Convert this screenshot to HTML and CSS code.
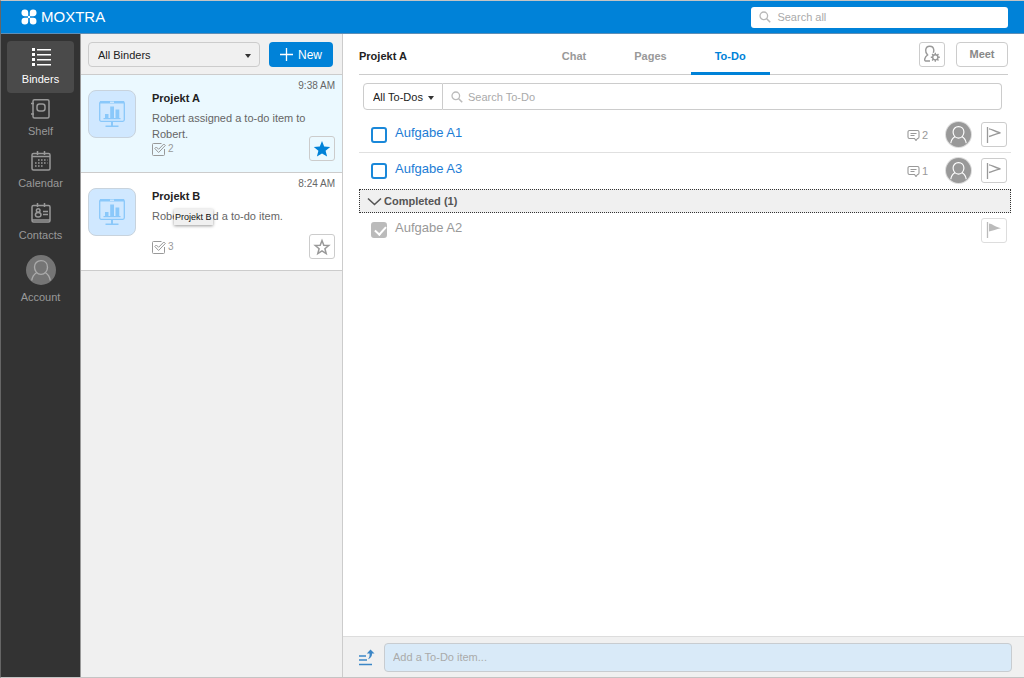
FILE: index.html
```html
<!DOCTYPE html>
<html lang="en">
<head>
    <meta charset="UTF-8">
    <meta name="viewport" content="width=device-width, initial-scale=1.0">
    <title>Moxtra - Projekt A</title>
    <link rel="stylesheet" href="styles.css">
</head>
<body>
    <!-- shared icons -->
    <svg class="sprite" aria-hidden="true">
        <symbol id="search" viewBox="0 0 12 12">
            <circle cx="4.8" cy="4.8" r="3.8" fill="none" stroke="currentColor" stroke-width="1.3"/>
            <path d="M7.7 7.7 11.2 11.2" stroke="currentColor" stroke-width="1.6"/>
        </symbol>
        <symbol id="board" viewBox="0 0 26 28">
            <rect x=".7" y="1.7" width="24.6" height="19.6" rx="1.5" fill="none" stroke="currentColor" stroke-width="1.3"/>
            <path d="M1 1h24v2.600H1zM4.500 18h17v1.300h-17zM6 14h3.500v4H6zM11.200 6.500H15V18h-3.800zM16.500 9.500h3.800V18h-3.800zM12 21.500h2V26h-2zM6.500 25.500h13V27h-13z" fill="currentColor"/>
            <path d="M11 2.200h4" stroke="#e8f4ff"/>
        </symbol>
        <symbol id="person" viewBox="0 0 24 24">
            <path d="M12 4.500c3.200 0 5.200 2.300 5.200 5.200S15.200 15.500 12 15.500 6.800 12.600 6.800 9.700 8.800 4.500 12 4.500zM8.500 14.200C6.200 15.500 5 17.500 4.600 20.400M15.500 14.200c2.300 1.300 3.500 3.300 3.900 6.200" fill="none" stroke="currentColor" stroke-width="1.1"/>
        </symbol>
        <symbol id="task" viewBox="0 0 14 14">
            <path d="M9.500 1.500h-8a1 1 0 0 0-1 1v10a1 1 0 0 0 1 1h10a1 1 0 0 0 1-1V7" fill="none" stroke="currentColor"/>
            <path d="M2.800 6.500 4.300 5l2.300 2.300L11.800 2l1.500 1.500-6.700 7z" fill="none" stroke="currentColor"/>
        </symbol>
        <symbol id="comment" viewBox="0 0 13 12">
            <path d="M2.500 1.500h8a1.500 1.500 0 0 1 1.500 1.500v5a1.500 1.500 0 0 1-1.500 1.500L9 11.500 7.500 9.500h-5A1.500 1.500 0 0 1 1 8V3a1.500 1.500 0 0 1 1.500-1.500zM3.500 4.500h6M3.500 6.500h4" fill="none" stroke="currentColor" stroke-width="1.100"/>
        </symbol>
        <symbol id="flag" viewBox="0 0 16 16">
            <path d="M1.500 0v16" stroke="currentColor" stroke-width="1.300"/>
            <path d="M3 1.800C6 2 8 4.500 14.500 5.800 10 6.500 7 8.500 3 9.500" fill="none" stroke="currentColor" stroke-width="1.300"/>
        </symbol>
        <symbol id="flag-full" viewBox="0 0 16 16">
            <path d="M1.500 0v16" stroke="currentColor" stroke-width="1.300"/>
            <path d="M3 1.500C6 1.500 8 4.500 15 6.300 10 7 7 9 3 9.500z" fill="currentColor"/>
        </symbol>
    </svg>

    <header class="topbar">
        <a class="logo" href="#">
            <svg width="16" height="16" viewBox="0 0 16 16" fill="#fff">
                <path d="M3.800.500A3.300 3.300 0 0 1 7.200 3.800V7.200H3.800a3.350 3.350 0 0 1 0-6.700zM12.200.500a3.350 3.350 0 0 1 0 6.700H8.800V3.800A3.300 3.300 0 0 1 12.200.500zM3.800 8.800h3.400v3.400A3.350 3.350 0 1 1 3.800 8.800zM8.800 8.800h3.400A3.350 3.350 0 1 1 8.800 12.200z"/>
                <path d="M6 6 10 10M10 6 6 10" stroke="#fff"/>
            </svg>
            <span>MOXTRA</span>
        </a>
        <label class="search-all">
            <svg width="12" height="12"><use href="#search"/></svg>
            <input type="search" placeholder="Search all" aria-label="Search all">
        </label>
    </header>

    <div class="app">
        <nav class="sidebar">
            <a class="nav-item active" href="#">
                <svg width="20" height="20" viewBox="0 0 20 20" fill="#fff">
                    <path d="M1 1h3v3H1zM1 6h3v3H1zM1 11h3v3H1zM1 16h3v3H1zM6 2h14v1.500H6zM6 7h14v1.500H6zM6 12h14v1.500H6zM6 17h14v1.500H6z"/>
                </svg>
                Binders
            </a>
            <a class="nav-item" href="#">
                <svg width="20" height="20" viewBox="0 0 20 20" fill="none" stroke="currentColor" stroke-width="1.500">
                    <rect x="2" y=".800" width="16" height="18.200" rx="1.500"/>
                    <rect x="6" y="5" width="8" height="7" rx="2.500"/>
                    <path d="M0 4.500h3M0 15h3"/>
                </svg>
                Shelf
            </a>
            <a class="nav-item" href="#">
                <svg width="20" height="20" viewBox="0 0 20 20" fill="none" stroke="currentColor" stroke-width="1.500">
                    <rect x="1" y="2.500" width="18" height="16.500" rx="1.500"/>
                    <path d="M1 5.500h18M6.500 0v4M13.500 0v4"/>
                    <path d="M7 9h9.500M4 12h12.500M4 15h9" stroke-width="1.600" stroke-dasharray="1.600 1.400"/>
                </svg>
                Calendar
            </a>
            <a class="nav-item" href="#">
                <svg width="20" height="20" viewBox="0 0 20 20" fill="none" stroke="currentColor" stroke-width="1.500">
                    <rect x="1" y="2.500" width="18" height="16.500" rx="1.500"/>
                    <path d="M1 17h18M6.500 0v4M13.500 0v4M12 8.500h5M12 11.500h5"/>
                    <circle cx="7.200" cy="7.500" r="1.800"/>
                    <ellipse cx="7.200" cy="11.700" rx="2.800" ry="2.300"/>
                </svg>
                Contacts
            </a>
            <a class="nav-item account" href="#">
                <svg class="avatar" width="30" height="30"><use href="#person"/></svg>
                Account
            </a>
        </nav>

        <section class="binders">
            <div class="binder-bar">
                <span class="select select-binders">
                    <select aria-label="Binder filter"><option>All Binders</option></select>
                </span>
                <button class="btn-new" type="button">
                    <svg width="13" height="13" viewBox="0 0 13 13"><path d="M6.500 0v13M0 6.500h13" stroke="#fff" stroke-width="1.300"/></svg>
                    New
                </button>
            </div>

            <article class="binder selected">
                <div class="cover"><svg width="26" height="28"><use href="#board"/></svg></div>
                <div class="binder-info">
                    <time>9:38 AM</time>
                    <h2>Projekt A</h2>
                    <p>Robert assigned a to-do item to Robert.</p>
                    <span class="count"><svg width="14" height="14"><use href="#task"/></svg>2</span>
                </div>
                <button class="icon-btn star on" type="button" aria-label="Favorite">
                    <svg width="18" height="18" viewBox="0 0 18 18"><path d="M9 1l2.200 5.600 6 .4-4.600 3.800 1.500 5.800L9 13.400l-5.100 3.200 1.500-5.800L.800 7l6-.4z" fill="currentColor"/></svg>
                </button>
            </article>

            <article class="binder">
                <div class="cover"><svg width="26" height="28"><use href="#board"/></svg></div>
                <div class="binder-info">
                    <time>8:24 AM</time>
                    <h2>Projekt B</h2>
                    <p>Robert added a to-do item.</p>
                    <span class="count"><svg width="14" height="14"><use href="#task"/></svg>3</span>
                    <span class="tooltip" role="tooltip">Projekt B</span>
                </div>
                <button class="icon-btn star" type="button" aria-label="Favorite">
                    <svg width="18" height="18" viewBox="0 0 18 18"><path d="M9 2.500l1.800 4.700 5 .3-3.900 3.200 1.300 4.900L9 12.900l-4.200 2.700 1.300-4.900-3.900-3.200 5-.3z" fill="none" stroke="currentColor" stroke-width="1.500"/></svg>
                </button>
            </article>
        </section>

        <main class="content">
            <div class="project-head">
                <h1>Projekt A</h1>
                <nav class="tabs">
                    <a href="#">Chat</a>
                    <a href="#">Pages</a>
                    <a class="active" href="#">To-Do</a>
                </nav>
                <div class="actions">
                    <button class="icon-btn" type="button" aria-label="Members">
                        <svg width="18" height="18" viewBox="0 0 18 18" fill="none" stroke="currentColor" stroke-width="1.400">
                            <path d="M7 16H2.500C1 16 1.500 12 4.600 10 3 8.500 2.500 6.800 2.700 5 3 2.500 4.500 1.200 6.700 1.200s3.900 1.500 4.100 3.800c.1 1-.2 2-.6 2.800"/>
                            <circle cx="12.300" cy="12.300" r="2.600"/>
                            <path d="M12.300 7.800v2M12.300 14.800v2M7.800 12.300h2M14.800 12.300h2M9.100 9.100l1.400 1.400M14.100 14.100l1.400 1.400M9.100 15.500l1.400-1.400M14.100 10.500l1.400-1.400"/>
                        </svg>
                    </button>
                    <button class="btn-meet" type="button">Meet</button>
                </div>
            </div>

            <div class="filter">
                <span class="select select-todos">
                    <select aria-label="To-do filter"><option>All To-Dos</option></select>
                </span>
                <label class="search-todo">
                    <svg width="12" height="12"><use href="#search"/></svg>
                    <input type="search" placeholder="Search To-Do" aria-label="Search To-Do">
                </label>
            </div>

            <div class="todo">
                <input type="checkbox" id="a1">
                <label for="a1">Aufgabe A1</label>
                <span class="comments"><svg width="13" height="12"><use href="#comment"/></svg>2</span>
                <svg class="avatar" width="25" height="25"><use href="#person"/></svg>
                <button class="icon-btn" type="button" aria-label="Flag"><svg width="16" height="16"><use href="#flag"/></svg></button>
            </div>
            <div class="todo">
                <input type="checkbox" id="a3">
                <label for="a3">Aufgabe A3</label>
                <span class="comments"><svg width="13" height="12"><use href="#comment"/></svg>1</span>
                <svg class="avatar" width="25" height="25"><use href="#person"/></svg>
                <button class="icon-btn" type="button" aria-label="Flag"><svg width="16" height="16"><use href="#flag"/></svg></button>
            </div>
            <button class="completed" type="button">
                <svg width="15" height="9" viewBox="0 0 15 9"><path d="M1 1.500 7.500 7.500 14 1.500" fill="none" stroke="currentColor" stroke-width="1.600"/></svg>
                Completed (1)
            </button>
            <div class="todo done">
                <input type="checkbox" id="a2" checked>
                <label for="a2">Aufgabe A2</label>
                <button class="icon-btn" type="button" aria-label="Flag"><svg width="16" height="16"><use href="#flag-full"/></svg></button>
            </div>

            <form class="add-todo">
                <svg width="17" height="17" viewBox="0 0 17 17">
                    <path d="M1 7h7M1 11h8M1 15.500h13" stroke="#3b86c6" stroke-width="1.600"/>
                    <path d="M12.500.500 16.500 4.500H14C14.200 7 13 9 10 10.200 11.500 8.500 11.800 6.500 11.500 4.500H8.800z" fill="#3b86c6"/>
                </svg>
                <input type="text" placeholder="Add a To-Do item..." aria-label="Add a To-Do item">
            </form>
        </main>
    </div>
</body>
</html>
```
FILE: styles.css
```css
* { box-sizing: border-box; }
body {
    margin: 0;
    min-height: 100vh;
    display: flex;
    flex-direction: column;
    font-family: "Liberation Sans", Arial, sans-serif;
    font-size: 11px;
    line-height: 16px;
    color: #333;
    background: #fff;
    border: 1px solid #c4c4c4;
    border-left-color: #666;
    border-right: none;
}
h1, h2, p { margin: 0; font-size: 11px; }
a { text-decoration: none; color: inherit; }
svg { flex: none; }
button, input, select { font: inherit; color: inherit; }
button { cursor: pointer; padding: 0; }
input::placeholder { color: #aaa; opacity: 1; }
.sprite { position: absolute; width: 0; height: 0; }

/* top bar */
.topbar {
    height: 33px;
    background: #0082d8;
    border-bottom: 1px solid #5f8eb5;
    display: flex;
    align-items: center;
    justify-content: space-between;
    padding: 0 16px 0 20px;
}
.logo {
    display: flex;
    align-items: center;
    gap: 4px;
    color: #fff;
    font-size: 15px;
}
.search-all {
    display: flex;
    align-items: center;
    gap: 6px;
    width: 26%;
    height: 21px;
    padding: 0 8px;
    background: #fff;
    border-radius: 3px;
    color: #b8b8b8;
}
.search-all input, .search-todo input {
    flex: 1;
    min-width: 0;
    border: none;
    outline: none;
    padding: 0;
    background: none;
    appearance: none;
}

.app { flex: 1; display: flex; }

/* sidebar */
.sidebar {
    width: 80px;
    flex: none;
    background: #333;
    border-right: 1px solid #999;
    padding: 7px 6px;
}
.nav-item {
    height: 52px;
    padding-top: 6px;
    border-radius: 4px;
    display: flex;
    flex-direction: column;
    align-items: center;
    gap: 4px;
    color: #999;
}
.nav-item.active { background: #4a4a4a; color: #fff; }
.avatar { border-radius: 50%; background: #999; color: #fff; }
.account { height: auto; }
.account .avatar { background: #757575; color: #aaa; }

/* binder list */
.binders {
    width: 262px;
    flex: none;
    background: #f0f0f0;
    border-right: 1px solid #ccc;
}
.binder-bar {
    display: flex;
    gap: 9px;
    height: 41px;
    padding: 8px 9px 7px 7px;
    border-bottom: 1px solid #ccc;
}
.select { position: relative; display: flex; }
.select select {
    width: 100%;
    padding: 0 9px;
    border: 1px solid #ccc;
    border-radius: 4px;
    background: none;
    appearance: none;
    outline: none;
    color: #222;
}
.select::after {
    content: "";
    position: absolute;
    top: 50%;
    right: 9px;
    margin-top: -1px;
    border: 3px solid transparent;
    border-top: 4px solid #333;
    border-bottom: none;
    pointer-events: none;
}
.select-binders { flex: 1; }
.btn-new {
    width: 64px;
    height: 25px;
    display: flex;
    align-items: center;
    justify-content: center;
    gap: 5px;
    border: none;
    border-radius: 4px;
    background: #0082d8;
    color: #fff;
    font-size: 12px;
}
.binder {
    position: relative;
    display: flex;
    gap: 16px;
    height: 98px;
    padding: 15px 7px;
    background: #fff;
    border-bottom: 1px solid #ccc;
}
.binder.selected { background: #ebf9ff; }
.cover {
    width: 48px;
    height: 48px;
    flex: none;
    display: flex;
    align-items: center;
    justify-content: center;
    border: 1px solid #c8d3dd;
    border-radius: 8px;
    background: #d0e8ff;
    color: #8ac8fa;
}
.binder-info { position: relative; flex: 1; color: #666; }
.binder-info h2 { color: #222; margin-bottom: 4px; }
.binder-info p { min-height: 32px; padding-right: 20px; }
.binder-info time {
    position: absolute;
    top: -12px;
    right: 0;
    font-size: 10px;
}
.count { display: flex; align-items: center; gap: 2px; color: #999; height: 14px; font-size: 10px; }
.icon-btn {
    width: 26px;
    height: 25px;
    display: flex;
    align-items: center;
    justify-content: center;
    border: 1px solid #ccc;
    border-radius: 3px;
    background: #fff;
    color: #999;
}
.star { position: absolute; right: 7px; bottom: 11px; }
.star.on { color: #0082d8; background: none; }
.tooltip {
    position: absolute;
    left: 22px;
    top: 21px;
    padding: 0 1px;
    background: #f0f0f0;
    box-shadow: 0 1px 3px rgba(0,0,0,0.4);
    color: #111;
    font-size: 9px;
}

/* project */
.content { flex: 1; min-width: 0; display: flex; flex-direction: column; }
.project-head {
    display: grid;
    grid-template-columns: 3fr auto 4fr;
    align-items: center;
    height: 41px;
    margin: 0 16px;
    border-bottom: 1px solid #ccc;
}
.project-head h1 { color: #222; padding-top: 4px; }
.tabs { display: flex; align-self: stretch; margin-bottom: -1px; }
.tabs a {
    padding: 14px 24px 0;
    color: #999;
    font-weight: bold;
    border-bottom: 3px solid transparent;
}
.tabs .active { color: #0082d8; border-color: #0082d8; }
.actions { display: flex; justify-content: flex-end; gap: 11px; }
.btn-meet {
    width: 52px;
    height: 25px;
    border: 1px solid #ccc;
    border-radius: 4px;
    background: #fff;
    color: #888;
    font-weight: bold;
}
.filter { display: flex; height: 27px; margin: 8px 22px 7px 20px; }
.select-todos { width: 80px; }
.select-todos select { border-radius: 4px 0 0 4px; }
.search-todo {
    flex: 1;
    display: flex;
    align-items: center;
    gap: 5px;
    padding: 0 8px;
    border: 1px solid #ccc;
    border-left: none;
    border-radius: 0 4px 4px 0;
    color: #bbb;
}
.todo {
    display: flex;
    align-items: center;
    height: 36px;
    margin: 0 13px 0 16px;
    padding: 0 4px 0 12px;
    border-bottom: 1px solid #e0e0e0;
}
.todo:has(+ .completed) { border-bottom-color: transparent; }
.todo label {
    flex: 1;
    padding: 0 8px 4px;
    font-size: 13px;
    color: #1c7cd5;
}
.todo input {
    width: 16px;
    height: 16px;
    margin: 0;
    appearance: none;
    border: 2px solid #1a88d9;
    border-radius: 3px;
    background: #fff;
}
.todo .avatar { margin: 0 10px 0 18px; box-shadow: 0 0 0 1px #ddd; }
.comments { display: flex; align-items: center; gap: 2px; color: #999; }
.completed {
    display: flex;
    align-items: center;
    gap: 2px;
    height: 24px;
    margin: 0 13px 0 16px;
    padding: 0 7px;
    background: #f0f0f0;
    border: 1px dotted #333;
    color: #555;
    font-weight: bold;
}
.todo.done { border: none; height: 34px; }
.todo.done label { color: #999; }
.todo.done .icon-btn { color: #bbb; border-color: #ddd; }
.todo.done input { position: relative; border-color: #bbb; background: #bbb; }
.todo.done input::after {
    content: "";
    position: absolute;
    left: 4px;
    top: 0;
    width: 5px;
    height: 9px;
    border: solid #fff;
    border-width: 0 2px 2px 0;
    transform: rotate(42deg);
}
.add-todo {
    display: flex;
    align-items: center;
    gap: 9px;
    margin-top: auto;
    height: 41px;
    padding: 0 12px 0 15px;
    background: #f0f0f0;
    border-top: 1px solid #ddd;
}
.add-todo input {
    flex: 1;
    height: 29px;
    padding: 0 8px;
    border: 1px solid #c8ccd0;
    border-radius: 4px;
    background: #d9eaf8;
}
```
